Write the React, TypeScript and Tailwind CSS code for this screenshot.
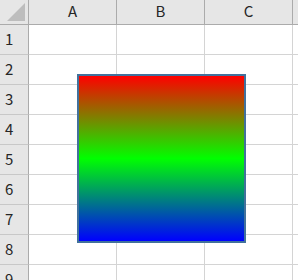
import React from "react";

const cols = ["A", "B", "C", ""];
const rows = [1, 2, 3, 4, 5, 6, 7, 8, 9];

function HeaderRow() {
  return (
    <div className="flex h-[25px] border-b border-[#ababab] bg-[#e6e6e6]">
      <div className="relative w-[29px] shrink-0 border-r border-[#ababab]">
        <svg className="absolute left-0 top-0" width="28" height="24" viewBox="0 0 28 24">
          <polygon points="25,3 25,21 7,21" fill="#bdbdbd" />
        </svg>
      </div>
      {cols.map((c, i) => (
        <div
          key={i}
          className="flex w-[88px] shrink-0 items-center justify-center border-r border-[#ababab] pb-[1px] text-[15px] text-[#262626]"
        >
          {c}
        </div>
      ))}
    </div>
  );
}

function GridRow({ n }: { n: number }) {
  return (
    <div className="flex h-[30px]">
      <div className="flex w-[29px] shrink-0 items-center border-b border-r border-b-[#c8c8c8] border-r-[#ababab] bg-[#e6e6e6] pl-[5px] text-[15px] text-[#262626]">
        {n}
      </div>
      {cols.map((_, i) => (
        <div key={i} className="w-[88px] shrink-0 border-b border-r border-[#d4d4d4] bg-white" />
      ))}
    </div>
  );
}

export default function App() {
  return (
    <div
      className="relative h-[280px] w-[298px] overflow-hidden bg-white"
      style={{ fontFamily: '"Noto Sans CJK JP", "Noto Sans", sans-serif' }}
    >
      <HeaderRow />
      {rows.map((n) => (
        <GridRow key={n} n={n} />
      ))}
      {/* gradient shape drawn over the cells */}
      <div className="absolute left-[77px] top-[74px] h-[169px] w-[169px] border-2 border-[#41719c] bg-[linear-gradient(to_bottom,#ff0000,#00ff00,#0000ff)]" />
    </div>
  );
}
